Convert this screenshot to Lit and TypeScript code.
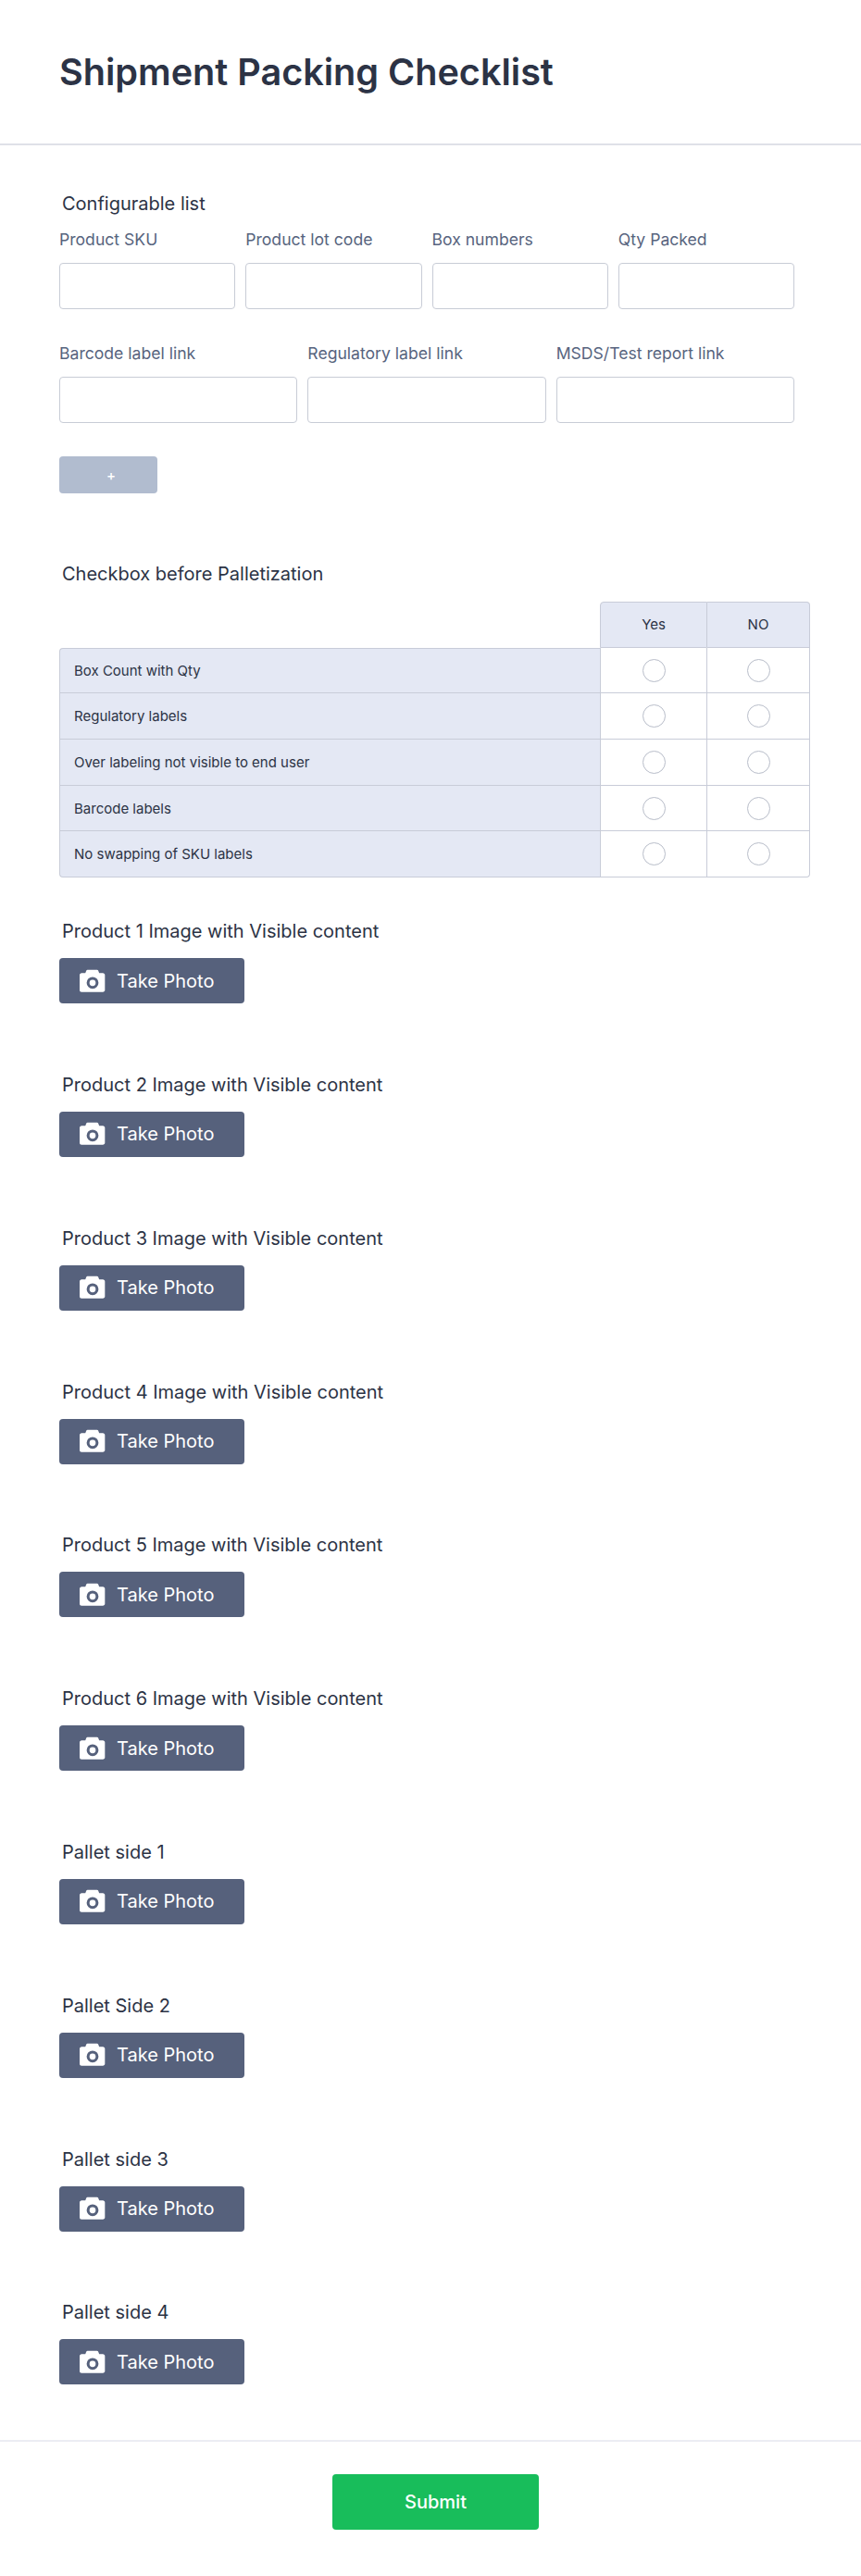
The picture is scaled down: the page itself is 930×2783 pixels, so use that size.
// app.ts - Shipment packing checklist form
import { LitElement, html, css, svg } from 'lit';
import { customElement } from 'lit/decorators.js';

const ROW_ONE = ['Product SKU', 'Product lot code', 'Box numbers', 'Qty Packed'];
const ROW_TWO = ['Barcode label link', 'Regulatory label link', 'MSDS/Test report link'];
const CHECKS = [
  'Box Count with Qty',
  'Regulatory labels',
  'Over labeling not visible to end user',
  'Barcode labels',
  'No swapping of SKU labels'
];
const PHOTOS = [
  'Product 1 Image with Visible content',
  'Product 2 Image with Visible content',
  'Product 3 Image with Visible content',
  'Product 4 Image with Visible content',
  'Product 5 Image with Visible content',
  'Product 6 Image with Visible content',
  'Pallet side 1',
  'Pallet Side 2',
  'Pallet side 3',
  'Pallet side 4'
];

const cameraIcon = svg`<path fill-rule="evenodd" d="M8.6 0.6h8.8c.6 0 1 .3 1.2.8l1 2.5h3.6c1.2 0 2.1.9 2.1 2.1v14.8c0 1.2-.9 2.1-2.1 2.1H2.2C1 23 .1 22.100 .1 20.800V6c0-1.200.9-2.100 2.100-2.100h3.600l1-2.500c.2-.5.700-.8 1.800-.8zM13 7.800a5.900 5.900 0 1 0 0 11.800a5.900 5.900 0 0 0 0-11.800zM13 10.600a3.100 3.100 0 1 1 0 6.200a3.100 3.100 0 0 1 0-6.200z"/>`;

@customElement('app-root')
export class AppRoot extends LitElement {
  static override styles = css`
    :host {
      display: block;
      background: #fff;
      font-family: Inter, 'Liberation Sans', sans-serif;
      color: #2c3345;
    }

    header {
      height: 155px;
      box-sizing: content-box;
      border-bottom: 2px solid #dfe1e8;
      padding-left: 64px;
      display: flex;
      align-items: center;
    }

    h1 {
      margin: 0;
      font-size: 39.6px;
      line-height: 48px;
      font-weight: 600;
    }

    main {
      padding: 51px 56px 60px 64px;
    }

    .label {
      margin-left: 3px;
      font-size: 20px;
      line-height: 24px;
      font-weight: 400;
    }

    .list-row {
      display: flex;
      gap: 11px;
      width: 794px;
      margin-top: 15px;
    }

    .list-row.second {
      margin-top: 36px;
    }

    .field {
      flex: 1;
      min-width: 0;
    }

    .field label {
      display: block;
      font-size: 17.6px;
      line-height: 24px;
      color: #57647e;
      margin-bottom: 13px;
    }

    .field input {
      display: block;
      width: 100%;
      height: 50px;
      box-sizing: border-box;
      border: 1px solid #c8ccd6;
      border-radius: 4px;
      background: #fff;
    }

    .add {
      display: block;
      width: 106px;
      height: 40px;
      margin-top: 36px;
      padding: 0 0 0 6px;
      border: 0;
      border-radius: 4px;
      background: #b1bccf;
      color: #fff;
      font: 500 15px Inter, sans-serif;
    }

    .checks {
      margin-top: 75px;
    }

    .matrix {
      display: grid;
      grid-template-columns: 584px 116px 111px;
      grid-auto-rows: 49.700px;
      margin-top: 18px;
      font-size: 15px;
    }

    .matrix > div {
      display: flex;
      align-items: center;
      justify-content: center;
      box-sizing: border-box;
      border-right: 1px solid #c8ccd8;
      border-bottom: 1px solid #c8ccd8;
    }

    .matrix .blank {
      border: 0;
    }

    .matrix .col {
      background: #e4e8f4;
      border-top: 1px solid #c8ccd8;
    }

    .matrix .col.first {
      border-left: 1px solid #c8ccd8;
      border-top-left-radius: 4px;
    }

    .matrix .col.last {
      border-top-right-radius: 4px;
    }

    .matrix .name {
      justify-content: flex-start;
      padding-left: 15px;
      background: #e4e8f4;
      border-left: 1px solid #c8ccd8;
      border-right: 0;
    }

    .matrix .name.top {
      border-top: 1px solid #c8ccd8;
      border-top-left-radius: 4px;
    }

    .matrix .cell.left {
      border-left: 1px solid #c8ccd8;
    }

    .matrix .bottom-left {
      border-bottom-left-radius: 4px;
    }

    .matrix .bottom-right {
      border-bottom-right-radius: 4px;
    }

    .radio {
      width: 25px;
      height: 25px;
      box-sizing: border-box;
      border: 1px solid #b8bdc9;
      border-radius: 50%;
      background: #fff;
    }

    .photos {
      display: flex;
      flex-direction: column;
      gap: 75.800px;
      margin-top: 46px;
    }

    .take {
      display: flex;
      align-items: center;
      width: 200px;
      height: 49px;
      margin-top: 17px;
      padding: 0 0 0 21px;
      box-sizing: border-box;
      border: 0;
      border-radius: 4px;
      background: #56617c;
      color: #fff;
      font: 400 20px Inter, sans-serif;
    }

    .take svg {
      width: 30px;
      height: 26px;
      margin-right: 11px;
      fill: #fff;
    }

    footer {
      border-top: 2px solid #ecedf3;
      padding: 35px 0 50px;
      display: flex;
      justify-content: center;
    }

    .submit {
      width: 223px;
      height: 60px;
      margin-left: 11px;
      border: 0;
      border-radius: 4px;
      background: #18bd5b;
      color: #fff;
      font: 500 20px Inter, sans-serif;
    }
  `;

  private renderField(name: string) {
    return html`<div class="field"><label>${name}</label><input type="text" /></div>`;
  }

  private renderCheck(name: string, index: number) {
    const top = index === 0;
    const end = index === CHECKS.length - 1;
    return html`
      <div class="name ${top ? 'top' : ''} ${end ? 'bottom-left' : ''}">${name}</div>
      <div class="cell left"><span class="radio"></span></div>
      <div class="cell ${end ? 'bottom-right' : ''}"><span class="radio"></span></div>
    `;
  }

  override render() {
    return html`
      <header><h1>Shipment Packing Checklist</h1></header>
      <main>
        <div class="label">Configurable list</div>
        <div class="list-row">${ROW_ONE.map((name) => this.renderField(name))}</div>
        <div class="list-row second">${ROW_TWO.map((name) => this.renderField(name))}</div>
        <button class="add">+</button>

        <div class="checks">
          <div class="label">Checkbox before Palletization</div>
          <div class="matrix">
            <div class="blank"></div>
            <div class="col first">Yes</div>
            <div class="col last">NO</div>
            ${CHECKS.map((name, index) => this.renderCheck(name, index))}
          </div>
        </div>

        <div class="photos">
          ${PHOTOS.map(
            (name) => html`
              <div class="photo">
                <div class="label">${name}</div>
                <button class="take">
                  <svg viewBox="0 0 26 24">${cameraIcon}</svg>
                  Take Photo
                </button>
              </div>
            `
          )}
        </div>
      </main>
      <footer><button class="submit">Submit</button></footer>
    `;
  }
}

declare global {
  interface HTMLElementTagNameMap {
    'app-root': AppRoot;
  }
}
